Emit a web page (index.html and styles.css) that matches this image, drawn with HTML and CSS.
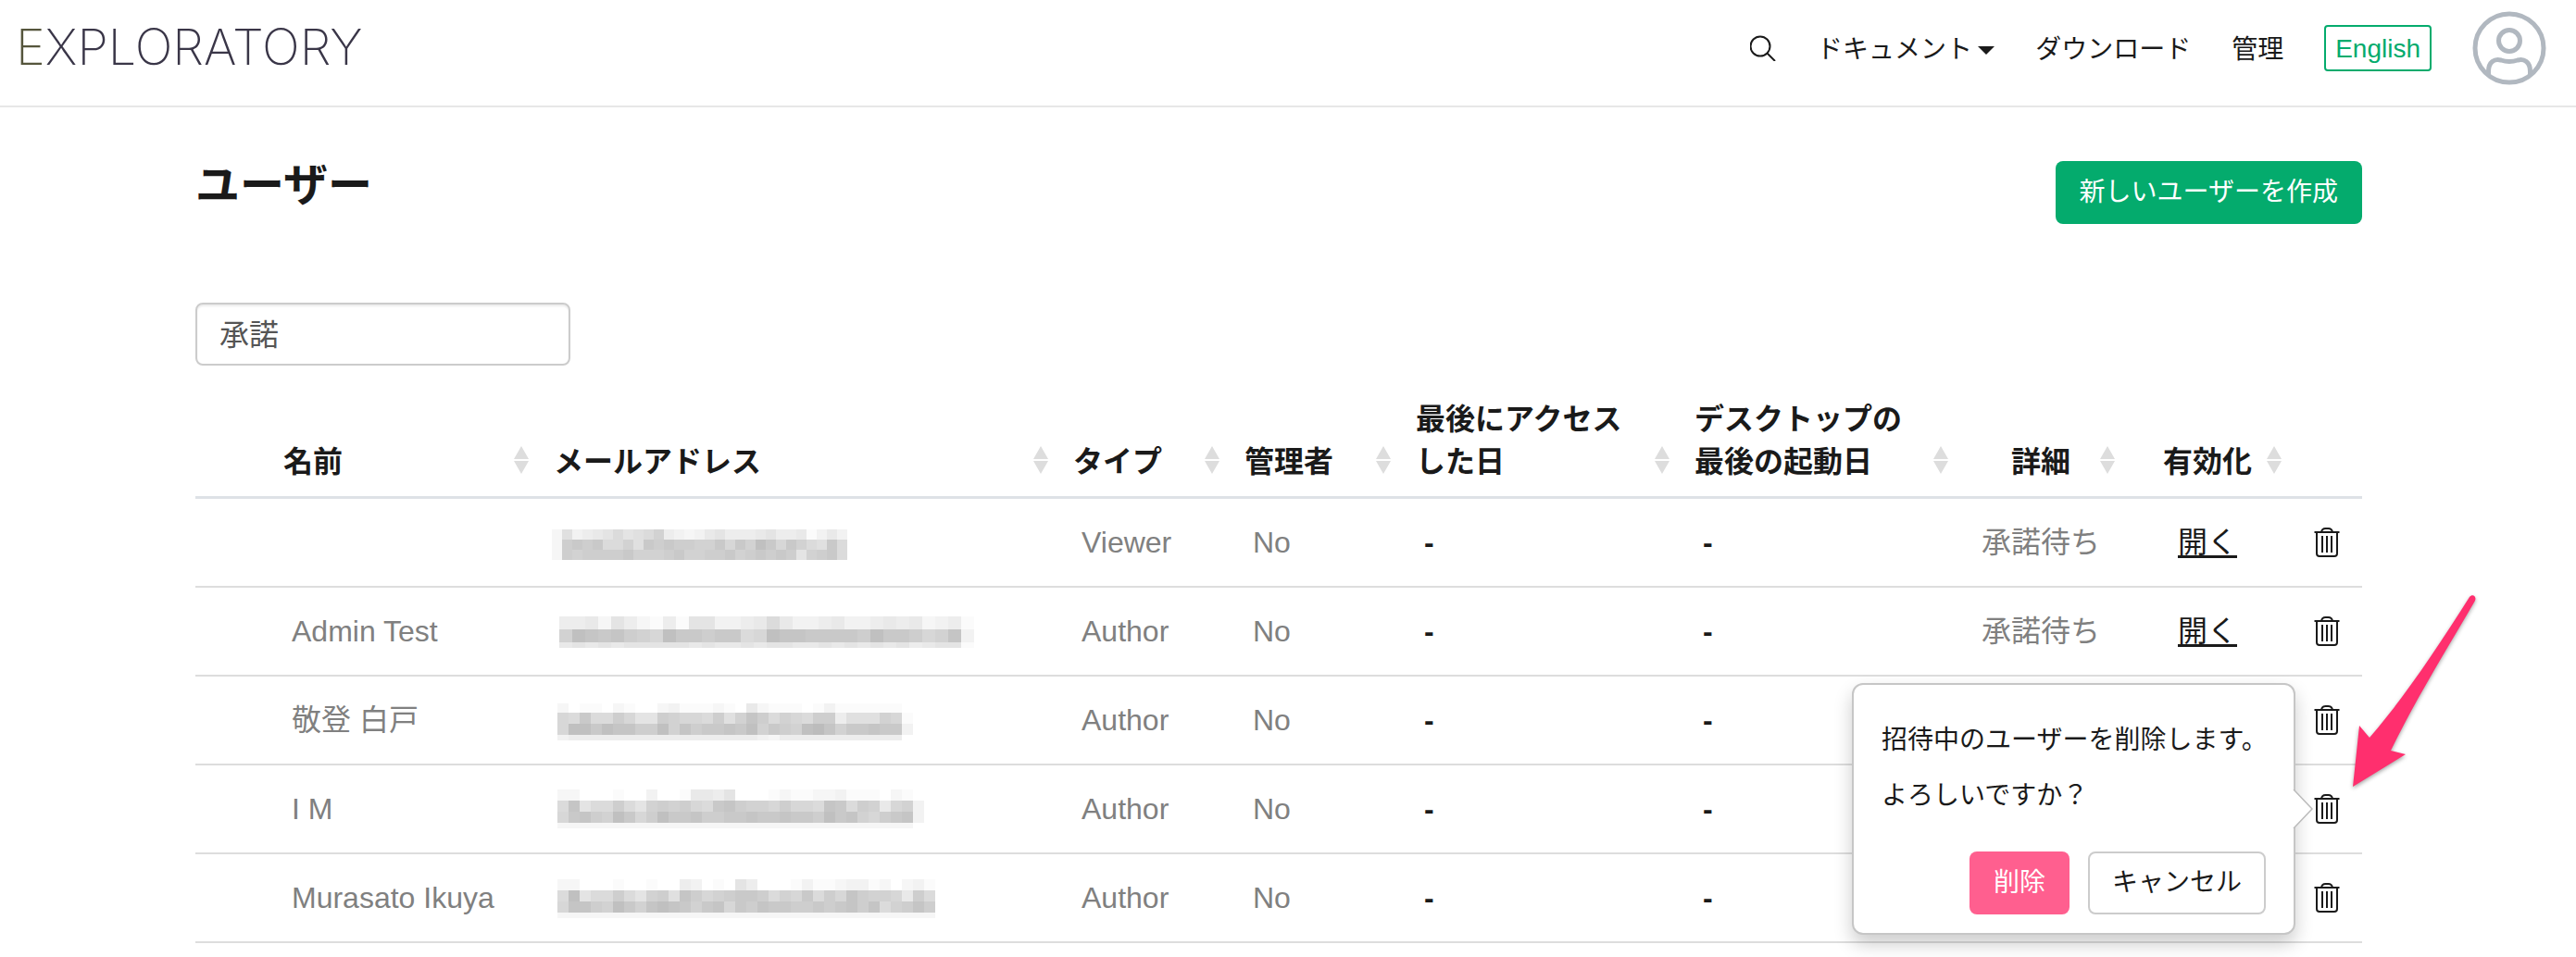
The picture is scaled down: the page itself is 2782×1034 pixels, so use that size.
FILE: index.html
```html
<!DOCTYPE html>
<html lang="ja">
<head>
    <meta charset="UTF-8">
    <meta name="viewport" content="width=device-width, initial-scale=1.0">
    <title>ユーザー - Exploratory</title>
    <link rel="stylesheet" href="styles.css">
</head>
<body>
    <svg class="sprite" aria-hidden="true">
        <symbol id="icon-sort" viewBox="0 0 16 30">
            <path d="M8 0L16 14H0zM0 16H16L8 30z" fill="#dddddd"/>
        </symbol>
        <symbol id="icon-trash" viewBox="0 0 28 32">
            <g fill="none" stroke="#1a1a1a" stroke-width="2">
                <path d="M0.5 5H27.5M8 5C8.500 2 10.500 1 12.500 1H15.500C17.500 1 19.500 2 20 5"/>
                <path d="M3 5V28Q3 31 6 31H22Q25 31 25 28V5M9 9V27M14 9V27M19 9V27"/>
            </g>
        </symbol>
    </svg>

    <header class="navbar">
        <a class="logo" href="#"><span class="logo-first">E</span>XPLORATORY</a>
        <nav class="nav">
            <button class="icon-button" aria-label="検索">
                <svg width="28" height="28" viewBox="0 0 28 28" fill="none" stroke="#1a1a1a" stroke-width="2">
                    <circle cx="11" cy="12" r="10.500"/>
                    <path d="M18.500 19.500L27 28"/>
                </svg>
            </button>
            <a class="nav-link" href="#">ドキュメント<span class="caret"></span></a>
            <a class="nav-link" href="#">ダウンロード</a>
            <a class="nav-link" href="#">管理</a>
            <button class="lang-button">English</button>
            <button class="icon-button" aria-label="アカウント">
                <svg width="80" height="80" viewBox="0 0 80 80" fill="none" stroke="#b1b8c0" stroke-width="5">
                    <circle cx="40" cy="40" r="37"/>
                    <circle cx="40" cy="32" r="11.500"/>
                    <path d="M17.500 68V65C17.500 55 24 51 31 53Q40 56 49 53C56 51 62.500 55 62.500 65V68"/>
                </svg>
            </button>
        </nav>
    </header>

    <main class="page">
        <div class="container">
            <div class="page-header">
                <h1>ユーザー</h1>
                <button class="btn btn-primary">新しいユーザーを作成</button>
            </div>

            <input class="search" type="text" value="承諾" aria-label="ユーザーを検索">

            <table class="users">
                <thead>
                    <tr>
                        <th class="col-lead"></th>
                        <th class="col-name">名前<svg class="sort"><use href="#icon-sort"/></svg></th>
                        <th>メールアドレス<svg class="sort"><use href="#icon-sort"/></svg></th>
                        <th class="col-type">タイプ<svg class="sort"><use href="#icon-sort"/></svg></th>
                        <th class="col-type">管理者<svg class="sort"><use href="#icon-sort"/></svg></th>
                        <th class="col-date">最後にアクセスした日<svg class="sort"><use href="#icon-sort"/></svg></th>
                        <th class="col-date">デスクトップの最後の起動日<svg class="sort"><use href="#icon-sort"/></svg></th>
                        <th class="col-state center">詳細<svg class="sort"><use href="#icon-sort"/></svg></th>
                        <th class="col-state center">有効化<svg class="sort"><use href="#icon-sort"/></svg></th>
                        <th class="col-delete"></th>
                    </tr>
                </thead>
                <tbody>
                    <tr>
                        <td></td>
                        <td></td>
                        <td class="mail"></td>
                        <td>Viewer</td>
                        <td>No</td>
                        <td class="date">-</td>
                        <td class="date">-</td>
                        <td class="center">承諾待ち</td>
                        <td class="center"><a class="open-link" href="#">開く</a></td>
                        <td class="delete"><button class="icon-button" aria-label="削除"><svg class="trash"><use href="#icon-trash"/></svg></button></td>
                    </tr>
                    <tr>
                        <td></td>
                        <td>Admin Test</td>
                        <td class="mail"></td>
                        <td>Author</td>
                        <td>No</td>
                        <td class="date">-</td>
                        <td class="date">-</td>
                        <td class="center">承諾待ち</td>
                        <td class="center"><a class="open-link" href="#">開く</a></td>
                        <td class="delete"><button class="icon-button" aria-label="削除"><svg class="trash"><use href="#icon-trash"/></svg></button></td>
                    </tr>
                    <tr>
                        <td></td>
                        <td>敬登 白戸</td>
                        <td class="mail"></td>
                        <td>Author</td>
                        <td>No</td>
                        <td class="date">-</td>
                        <td class="date">-</td>
                        <td></td>
                        <td></td>
                        <td class="delete"><button class="icon-button" aria-label="削除"><svg class="trash"><use href="#icon-trash"/></svg></button></td>
                    </tr>
                    <tr>
                        <td></td>
                        <td>I M</td>
                        <td class="mail"></td>
                        <td>Author</td>
                        <td>No</td>
                        <td class="date">-</td>
                        <td class="date">-</td>
                        <td></td>
                        <td></td>
                        <td class="delete">
                            <div class="delete-wrap">
                                <button class="icon-button" aria-label="削除"><svg class="trash"><use href="#icon-trash"/></svg></button>
                                <div class="popover" role="dialog" aria-label="ユーザーの削除">
                                    <p>招待中のユーザーを削除します。</p>
                                    <p>よろしいですか？</p>
                                    <div class="popover-actions">
                                        <button class="btn btn-danger">削除</button>
                                        <button class="btn btn-default">キャンセル</button>
                                    </div>
                                    <svg class="popover-arrow" viewBox="0 0 22 42">
                                        <path d="M0 0H1L21 21L1 42H0z" fill="#ffffff"/>
                                        <path d="M1 0L21 21L1 42" fill="none" stroke="#bbbbbb" stroke-width="1.500"/>
                                    </svg>
                                </div>
                                <svg class="pointer" viewBox="0 0 144 218">
                                    <path d="M5 211L12 145L23 158C62 113 98 58 131 6C134 2 139 5 137 10C108 60 72 118 46 172L62 176z" fill="#ff2f6e"/>
                                </svg>
                            </div>
                        </td>
                    </tr>
                    <tr>
                        <td></td>
                        <td>Murasato Ikuya</td>
                        <td class="mail"></td>
                        <td>Author</td>
                        <td>No</td>
                        <td class="date">-</td>
                        <td class="date">-</td>
                        <td></td>
                        <td></td>
                        <td class="delete"><button class="icon-button" aria-label="削除"><svg class="trash"><use href="#icon-trash"/></svg></button></td>
                    </tr>
                </tbody>
            </table>
        </div>
    </main>

    <script>
        // Masked addresses: one hex digit per block, 0 = white, f = darkest gray
        const masks = [
            { x: 0, y: 8, size: 11, heights: [11, 11, 11], lines: [
                '2734568678a432356444564451353',
                '2bcbc88a7cbcbbaac9caec9ca87c8',
                '2babbbbcaaabcaabbcabcbcb6abc8'] },
            { x: 8, y: 6, size: 14, heights: [14, 14, 6], lines: [
                '44526421416633458533453345452341',
                'aedcdba9eccbcc89eddccccbeccb9ad3',
                '56565666665655656655656565645661'] },
            { x: 6, y: 4, size: 12, heights: [10, 12, 12, 10], lines: [
                '20110210023111210521110131111110',
                '98c88b966ba998b7adb8a98bb4777a91',
                '9eeceddbbeadbccdceacbaefdaccdcc3',
                '34444444444444444432444444444440'] },
            { x: 6, y: 1, size: 12, heights: [12, 12, 12, 6], lines: [
                '220001003001554600012112231110210',
                '8d688b86abab98cdbaa9b998dc8ba59a3',
                '9cdbaec9beccdbbccdccdccbecda9bcd3',
                '222222222222222222222222222222220'] },
            { x: 6, y: 2, size: 12, heights: [12, 12, 12, 7], lines: [
                '22000100100430106400013112331202310',
                '8e688b86ab7db9abccb8a9c8b9dbaa95b80',
                '9ddbaecadedcacd9cbdccbbcbcdbd8abdb0',
                '22222222222222222222222222222222220'] }
        ];

        document.querySelectorAll('.mail').forEach((cell, i) => {
            const mask = masks[i];
            let y = mask.y;
            let rects = '';
            mask.lines.forEach((line, row) => {
                [...line].forEach((digit, col) => {
                    const gray = Math.round(255 - parseInt(digit, 16) * 4.5);
                    rects += `<rect x="${mask.x + col * mask.size}" y="${y}" width="${mask.size}" height="${mask.heights[row]}" fill="rgb(${gray},${gray},${gray})"/>`;
                });
                y += mask.heights[row];
            });
            cell.innerHTML = `<svg class="mask" viewBox="0 0 460 44" aria-hidden="true">${rects}</svg>`;
        });
    </script>
</body>
</html>
```
FILE: styles.css
```css
* {
    box-sizing: border-box;
}
body {
    min-height: 100vh;
    margin: 0;
    background: #ffffff;
    color: #1a1a1a;
    font-family: 'Liberation Sans', 'Noto Sans CJK JP', sans-serif;
    font-size: 28px;
}
button {
    font-family: inherit;
    font-size: 28px;
    cursor: pointer;
}
svg {
    display: block;
}
.sprite {
    display: none;
}
.navbar {
    display: flex;
    justify-content: space-between;
    align-items: flex-start;
    height: 116px;
    padding: 0 32px 0 17px;
    border-bottom: 2px solid #e7e7e7;
}
.logo {
    padding-top: 19px;
    font-family: Inter, sans-serif;
    font-size: 54px;
    font-weight: 200;
    line-height: 64px;
    color: #3a3648;
    text-decoration: none;
}
.logo-first {
    color: #55553c;
}
.nav {
    display: flex;
    align-items: center;
    gap: 44px;
    padding-top: 12px;
}
.nav-link {
    display: flex;
    align-items: center;
    gap: 6px;
    padding-top: 4px;
    line-height: 40px;
    color: #1a1a1a;
    text-decoration: none;
}
.caret {
    border-top: 9px solid #1a1a1a;
    border-left: 9px solid transparent;
    border-right: 9px solid transparent;
}
.icon-button {
    display: block;
    padding: 0;
    border: none;
    background: none;
}
.lang-button {
    height: 50px;
    padding: 2px 10px 0;
    border: 2px solid #04ab6d;
    border-radius: 4px;
    background: #ffffff;
    color: #04ab6d;
}
.page {
    padding: 58px 20px 0 0;
}
.container {
    max-width: 2340px;
    margin: 0 auto;
}
.page-header {
    display: flex;
    justify-content: space-between;
    align-items: flex-start;
}
h1 {
    margin: 0;
    font-size: 48px;
    line-height: 54px;
}
.btn {
    height: 68px;
    padding: 0 24px;
    border: 2px solid transparent;
    border-radius: 8px;
    line-height: 40px;
}
.btn-primary {
    background: #04ab6d;
    color: #ffffff;
}
.btn-danger {
    background: #ff5f8f;
    color: #ffffff;
}
.btn-default {
    border-color: #cccccc;
    background: #ffffff;
    color: #1a1a1a;
}
.search {
    display: block;
    width: 405px;
    height: 68px;
    margin-top: 85px;
    padding: 0 24px 4px;
    border: 2px solid #cccccc;
    border-radius: 8px;
    box-shadow: inset 0 2px 2px rgba(0, 0, 0, 0.08);
    background: #ffffff;
    color: #555555;
    font-family: inherit;
    font-size: 32px;
}
.users {
    width: 100%;
    margin-top: 19px;
    border-collapse: separate;
    border-spacing: 0;
    table-layout: fixed;
    font-size: 32px;
}
.users th {
    position: relative;
    padding: 16px 36px 14px 17px;
    border-bottom: 3px solid #dee2e6;
    line-height: 46px;
    text-align: left;
    vertical-align: bottom;
}
.users td {
    height: 96px;
    padding: 0 24px 0 26px;
    border-bottom: 2px solid #dddddd;
    color: #808080;
    line-height: 46px;
}
.users .center {
    padding-left: 18px;
    padding-right: 18px;
    text-align: center;
}
.users .mail {
    padding: 0 0 0 15px;
}
.users .date {
    color: #1a1a1a;
    font-weight: bold;
}
.users .delete {
    padding: 0 24px 0 25px;
}
.col-lead {
    width: 78px;
}
.col-name {
    width: 292px;
}
.col-type {
    width: 185px;
}
.col-date {
    width: 301px;
}
.col-state {
    width: 180px;
}
.col-delete {
    width: 77px;
}
.sort {
    position: absolute;
    right: 10px;
    bottom: 24px;
    width: 16px;
    height: 30px;
}
.mask {
    width: 460px;
    height: 44px;
    shape-rendering: crispEdges;
}
.open-link {
    color: #1a1a1a;
    text-underline-offset: 3px;
}
.trash {
    width: 28px;
    height: 32px;
}
.delete-wrap {
    position: relative;
    width: 28px;
}
.popover {
    position: absolute;
    right: calc(100% + 20px);
    top: 50%;
    transform: translateY(-50%);
    width: 479px;
    padding: 30px 30px 20px;
    border: 2px solid #c6c6c6;
    border-radius: 12px;
    background: #ffffff;
    box-shadow: 0 10px 20px rgba(0, 0, 0, 0.2);
    color: #1a1a1a;
    font-size: 28px;
}
.popover p {
    margin: 0;
    line-height: 60px;
    white-space: nowrap;
}
.popover-actions {
    display: flex;
    justify-content: flex-end;
    gap: 20px;
    margin-top: 30px;
}
.popover-arrow {
    position: absolute;
    left: calc(100% - 1px);
    top: calc(50% - 21px);
    width: 22px;
    height: 42px;
}
.pointer {
    position: absolute;
    left: 37px;
    bottom: 33px;
    width: 144px;
    height: 218px;
    filter: drop-shadow(0 2px 2px rgba(0, 0, 0, 0.35));
    pointer-events: none;
}
```
